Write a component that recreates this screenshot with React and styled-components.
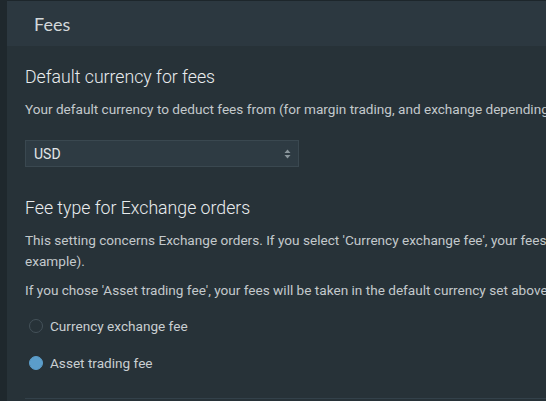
import styled, { createGlobalStyle } from "styled-components";

const GlobalStyle = createGlobalStyle`
  html, body {
    margin: 0;
    padding: 0;
    background: #273238;
    overflow: hidden;
  }
  body {
    font-family: Roboto, "Liberation Sans", sans-serif;
  }
`;

const Page = styled.div`
  display: flex;
  width: 546px;
  height: 401px;
  overflow: hidden;
`;

const SideStrip = styled.div`
  flex: 0 0 7px;
  background: #1f282d;
`;

const Panel = styled.div`
  flex: 1;
  min-width: 0;
  display: flex;
  flex-direction: column;
  background: #273238;
`;

const PanelHeader = styled.div`
  height: 46px;
  border-top: 1px solid #1d262b;
  background: #2c3840;
  display: flex;
  align-items: center;
  padding-left: 27px;
  font-family: Lato, "Liberation Sans", sans-serif;
  font-size: 18px;
  color: #d3d8db;
  box-sizing: border-box;
`;

const Body = styled.div`
  padding: 19px 0 0 18px;
  width: 700px;
`;

const Section = styled.section`
  margin-bottom: ${(p) => p.$gap || 0}px;
`;

const Title = styled.h2`
  margin: 0 0 10px;
  font-weight: 300;
  font-size: 17.7px;
  line-height: 24px;
  color: #e9ecee;
`;

const Para = styled.p`
  margin: 0 0 ${(p) => p.$after ?? 8}px;
  font-size: 13.6px;
  line-height: 21px;
  color: #c3c9cc;
  white-space: nowrap;
`;

const SelectBox = styled.div`
  width: 274px;
  height: 27px;
  margin-top: 20px;
  box-sizing: border-box;
  border: 1px solid #3a4850;
  background: #2e3b43;
  display: flex;
  align-items: center;
  justify-content: space-between;
  padding: 0 7px 0 8px;
  font-size: 14px;
  color: #e2e6e8;
`;

const Arrows = styled.svg`
  width: 7px;
  height: 10px;
`;

const RadioList = styled.div`
  display: flex;
  flex-direction: column;
  gap: 16px;
  margin-top: 14px;
`;

const RadioRow = styled.label`
  display: flex;
  align-items: center;
  gap: 7px;
  height: 21px;
  margin-left: 4px;
  font-size: 13.6px;
  color: #c9cfd2;
`;

const Dot = styled.span`
  width: 14px;
  height: 14px;
  border-radius: 50%;
  box-sizing: border-box;
  border: 1px solid ${(p) => (p.$on ? "#5b9dca" : "#445159")};
  background: ${(p) => (p.$on ? "#5b9dca" : "transparent")};
`;

const BottomRule = styled.div`
  margin-top: 25px;
  width: 600px;
  border-top: 1px solid #33414a;
`;

export default function App() {
  return (
    <Page>
      <GlobalStyle />
      <SideStrip />
      <Panel>
        <PanelHeader>Fees</PanelHeader>
        <Body>
          <Section $gap={29}>
            <Title>Default currency for fees</Title>
            <Para $after={0}>
              Your default currency to deduct fees from (for margin trading, and exchange depending on your settings below).
            </Para>
            <SelectBox>
              <span>USD</span>
              <Arrows viewBox="0 0 7 10">
                <path d="M3.5 0.5 L6.5 4 H0.5 Z M3.5 9.5 L6.5 6 H0.5 Z" fill="#8a969c" />
              </Arrows>
            </SelectBox>
          </Section>
          <Section>
            <Title>Fee type for Exchange orders</Title>
            <Para>
              This setting concerns Exchange orders. If you select 'Currency exchange fee', your fees will be taken in the currency you receive (for
              <br />
              example).
            </Para>
            <Para $after={0}>
              If you chose 'Asset trading fee', your fees will be taken in the default currency set above.
            </Para>
            <RadioList>
              <RadioRow>
                <Dot />
                Currency exchange fee
              </RadioRow>
              <RadioRow>
                <Dot $on />
                Asset trading fee
              </RadioRow>
            </RadioList>
            <BottomRule />
          </Section>
        </Body>
      </Panel>
    </Page>
  );
}
